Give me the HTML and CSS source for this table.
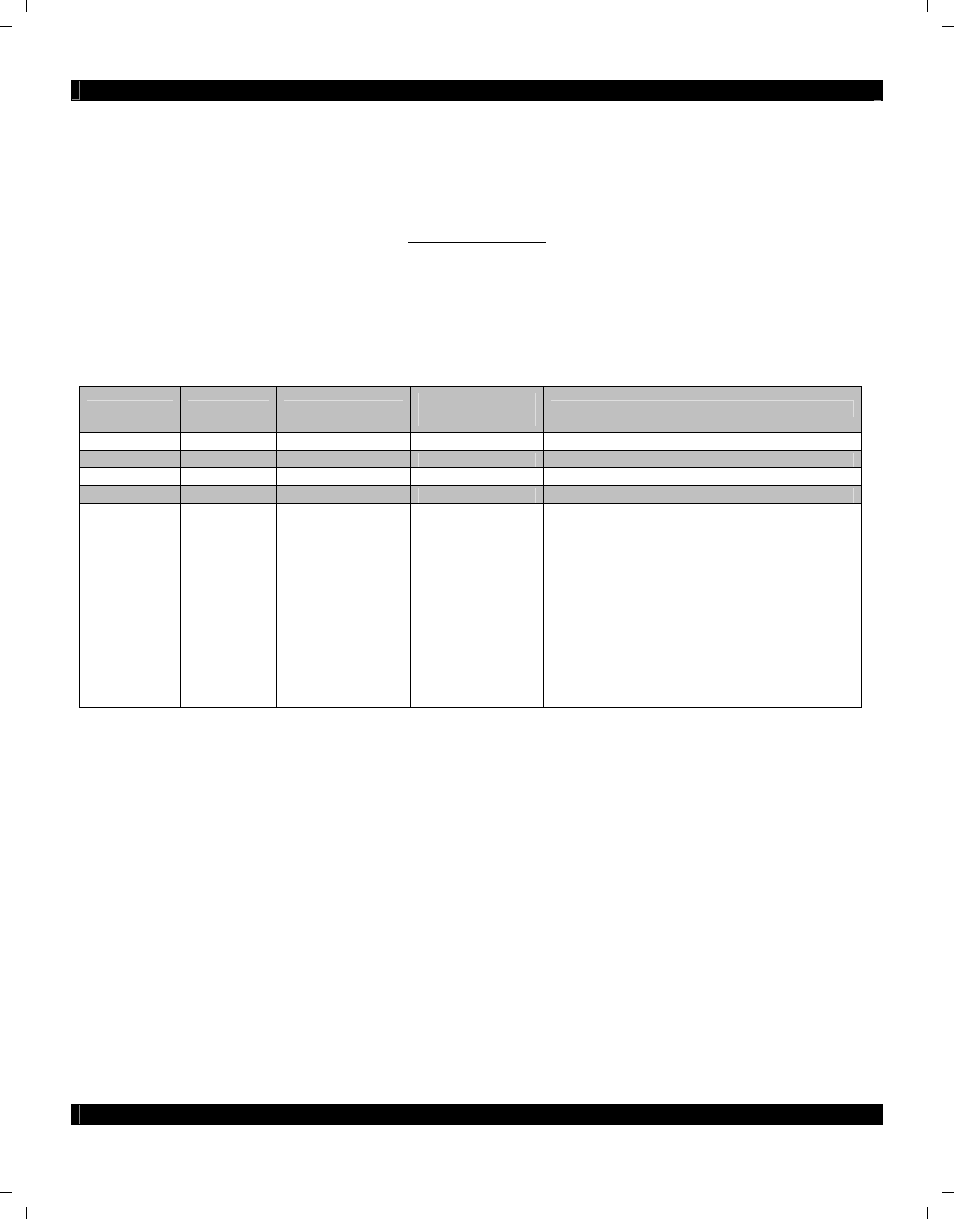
FILE: index.html
```html
<!DOCTYPE html>
<html>
<head>
<meta charset="utf-8">
<link rel="stylesheet" href="styles.css">
</head>
<body>
<div class="page">
  <span class="crop crop-v tl-v"></span>
  <span class="crop crop-h tl-h"></span>
  <span class="crop crop-v tr-v"></span>
  <span class="crop crop-h tr-h"></span>
  <span class="crop crop-v bl-v"></span>
  <span class="crop crop-h bl-h"></span>
  <span class="crop crop-v br-v"></span>
  <span class="crop crop-h br-h"></span>

  <div class="bar bar-top"><span class="bar-edge corner"></span><span class="bar-tail"></span></div>

  <h1 class="title"></h1>

  <div class="grid">
    <div class="cell head"><span class="hline"></span></div>
    <div class="cell head"><span class="hline"></span></div>
    <div class="cell head"><span class="hline"></span></div>
    <div class="cell head"><span class="vpair"></span></div>
    <div class="cell head"><span class="hbox"></span></div>

    <div class="cell"></div><div class="cell"></div><div class="cell"></div><div class="cell"></div><div class="cell"></div>

    <div class="cell shade"></div><div class="cell shade"></div><div class="cell shade"></div>
    <div class="cell shade"><span class="vpair short"></span></div>
    <div class="cell shade"><span class="vright"></span></div>

    <div class="cell"></div><div class="cell"></div><div class="cell"></div><div class="cell"></div><div class="cell"></div>

    <div class="cell shade"></div><div class="cell shade"></div><div class="cell shade"></div>
    <div class="cell shade"><span class="vpair short"></span></div>
    <div class="cell shade"><span class="vright"></span></div>

    <div class="cell tall"></div><div class="cell tall"></div><div class="cell tall"></div><div class="cell tall"></div><div class="cell tall"></div>
  </div>

  <div class="bar bar-bottom"><span class="bar-edge"></span></div>
</div>
</body>
</html>
```

FILE: styles.css
```css
html, body {
  margin: 0;
  padding: 0;
  background: #ffffff;
  font-family: "Liberation Serif", serif;
}

.page {
  position: relative;
  width: 954px;
  height: 1219px;
  padding-top: 80px;
  box-sizing: border-box;
  overflow: hidden;
}

/* crop marks */
.crop {
  position: absolute;
  background: #000;
}
.crop-v { width: 1px; height: 12px; }
.crop-h { width: 12px; height: 1px; }
.tl-v { left: 26px; top: 0; }
.tl-h { left: 0; top: 26px; }
.tr-v { left: 927px; top: 0; }
.tr-h { left: 942px; top: 26px; }
.bl-v { left: 26px; top: 1207px; }
.bl-h { left: 0; top: 1192px; }
.br-v { left: 927px; top: 1207px; }
.br-h { left: 942px; top: 1192px; }

/* black bars */
.bar {
  position: relative;
  margin-left: 71px;
  width: 812px;
  height: 21px;
  background: #000;
}
.bar-edge {
  position: absolute;
  left: 1px;
  top: 1px;
  width: 8px;
  height: 19px;
  border-right: 1px solid #8a8a8a;
  box-sizing: border-box;
}
.bar-edge.corner {
  border-bottom: 1px solid #8a8a8a;
}
.bar-tail {
  position: absolute;
  right: 2px;
  top: 20px;
  width: 7px;
  height: 1px;
  background: #8a8a8a;
}

/* title underline */
.title {
  margin: 141px auto 0;
  width: 138px;
  height: 0;
  border-bottom: 1px solid #000;
}

/* table grid */
.grid {
  margin: 143px 0 0 79px;
  width: 783px;
  display: grid;
  grid-template-columns: 100px 95px 133px 132px 317px;
  grid-template-rows: 45px 17px 16px 17px 17px 203px;
  gap: 1px;
  padding: 1px;
  box-sizing: border-box;
  background: #000;
}
.cell {
  position: relative;
  background: #fff;
}
.cell.head, .cell.shade {
  background: #c0c0c0;
}

/* faint field outlines inside shaded cells */
.hline {
  position: absolute;
  left: 7px;
  right: 7px;
  top: 13px;
  height: 1px;
  background: #dedede;
}
.vpair {
  position: absolute;
  left: 7px;
  right: 7px;
  top: 6px;
  bottom: 6px;
  border-left: 1px solid #dedede;
  border-right: 1px solid #dedede;
}
.vpair.short {
  top: 2px;
  bottom: 0;
}
.hbox {
  position: absolute;
  left: 7px;
  right: 7px;
  top: 13px;
  height: 16px;
  border-top: 1px solid #dedede;
  border-right: 1px solid #dedede;
}
.vright {
  position: absolute;
  right: 7px;
  top: 2px;
  bottom: 0;
  width: 1px;
  background: #dedede;
}

.bar-bottom {
  margin-top: 396px;
}
```
